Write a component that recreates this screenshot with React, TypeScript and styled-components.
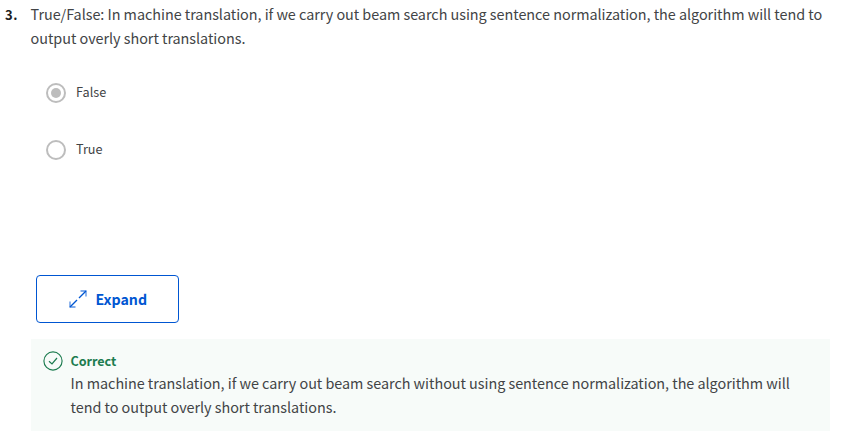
import React from "react";
import styled, { createGlobalStyle } from "styled-components";

const GlobalStyle = createGlobalStyle`
  * { box-sizing: border-box; }
  body {
    margin: 0;
    background: #fff;
    color: #424446;
    font-family: "Noto Sans CJK SC", "Noto Sans", sans-serif;
  }
`;

const Page = styled.main`
  width: 849px;
  height: 441px;
  padding-top: 2px;
  overflow: hidden;
`;

const Question = styled.section`
  display: grid;
  grid-template-columns: 25.6px 1fr;
  padding-left: 5px;
`;

const QuestionNumber = styled.span`
  color: #1f1f1f;
  font-size: 13px;
  font-weight: 700;
  line-height: 26px;
  letter-spacing: 0.7px;
`;

const Line = styled.span`
  display: block;
  font-size: 14.4px;
  line-height: 24px;
  white-space: nowrap;
  letter-spacing: -0.034px;
`;

const Options = styled.div`
  display: flex;
  flex-direction: column;
  gap: 33px;
  padding: 31px 0 0 46px;
`;

const Option = styled.label`
  display: flex;
  align-items: center;
  gap: 10px;
  height: 24px;
`;

const OptionText = styled.span`
  padding-bottom: 2px;
  font-size: 12.7px;
  line-height: 22px;
`;

const Radio = styled.span`
  display: grid;
  place-items: center;
  width: 20px;
  height: 20px;
  border: 2px solid #bdbdbd;
  border-radius: 50%;
`;

const RadioDot = styled.span`
  width: 10px;
  height: 10px;
  border-radius: 50%;
  background: #bdbdbd;
`;

const ExpandButton = styled.button`
  display: flex;
  align-items: center;
  gap: 8.5px;
  width: 143px;
  height: 48px;
  margin: 113px 0 0 36px;
  padding: 0 0 0 32px;
  border: 1px solid #0056d2;
  border-radius: 4px;
  background: #fff;
  color: #0056d2;
  font: 700 14.2px/24px "Noto Sans CJK SC", "Noto Sans", sans-serif;
`;

const Feedback = styled.section`
  display: grid;
  grid-template-columns: 20px 1fr;
  column-gap: 7.6px;
  width: 799px;
  height: 92px;
  margin: 16px 0 0 31px;
  padding: 12px 12px 0;
  background: #f7fbf9;
`;

const FeedbackText = styled.div`
  margin-top: -1px;
`;

const FeedbackTitle = styled.strong`
  display: block;
  color: #1d7c50;
  font-size: 12.6px;
  font-weight: 700;
  line-height: 21px;
  letter-spacing: -0.06px;
`;

export default function App() {
  return (
    <Page>
      <GlobalStyle />
      <Question>
        <QuestionNumber>3.</QuestionNumber>
        <div>
          <Line>
            True/False: In machine translation, if we carry out beam search using sentence normalization, the algorithm will tend to
          </Line>
          <Line>output overly short translations.</Line>
        </div>
      </Question>
      <Options>
        <Option>
          <Radio>
            <RadioDot />
          </Radio>
          <OptionText>False</OptionText>
        </Option>
        <Option>
          <Radio />
          <OptionText>True</OptionText>
        </Option>
      </Options>
      <ExpandButton>
        <svg width="18" height="18" viewBox="0 0 18 18" fill="none" stroke="#0056d2">
          <path d="M1 17L8 10M10 8L17 1" strokeWidth="1.35" />
          <path d="M11.5 1H17V6.5M1 11.5V17H6.5" strokeWidth="1.3" strokeOpacity="0.65" />
        </svg>
        Expand
      </ExpandButton>
      <Feedback>
        <svg width="20" height="20" viewBox="0 0 20 20" fill="none" stroke="#1d7c50">
          <circle cx="10" cy="10" r="9.1" strokeWidth="1.15" />
          <path d="M6 10.2L9 13L14 7" strokeWidth="1.2" />
        </svg>
        <FeedbackText>
          <FeedbackTitle>Correct</FeedbackTitle>
          <Line>
            In machine translation, if we carry out beam search without using sentence normalization, the algorithm will
          </Line>
          <Line>tend to output overly short translations.</Line>
        </FeedbackText>
      </Feedback>
    </Page>
  );
}
